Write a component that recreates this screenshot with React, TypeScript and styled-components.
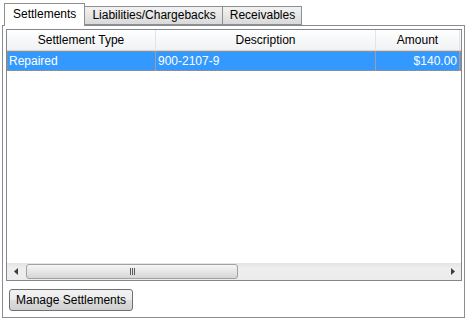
import React from "react";
import styled, { createGlobalStyle } from "styled-components";

const GlobalStyle = createGlobalStyle`
  html, body {
    margin: 0;
    padding: 0;
    background: #ffffff;
  }
  body {
    font-family: "Liberation Sans", Arial, sans-serif;
    font-size: 12px;
    color: #000000;
  }
`;

const COLS = "149px 220px 84px 1fr";

const Window = styled.div`
  width: 468px;
  height: 320px;
  box-sizing: border-box;
  padding: 4px 3px 2px 2px;
  display: flex;
  flex-direction: column;
`;

const TabStrip = styled.div`
  display: flex;
  align-items: flex-end;
  padding-left: 2px;
  height: 22px;
  margin-bottom: -1px;
  position: relative;
  z-index: 1;
`;

const Tab = styled.div<{ $active?: boolean }>`
  box-sizing: border-box;
  height: ${(p) => (p.$active ? "23px" : "19px")};
  margin-bottom: ${(p) => (p.$active ? "0" : "1px")};
  padding: ${(p) => (p.$active ? "3px 8px 0" : "1px 6px 0 7px")};
  margin-left: ${(p) => (p.$active ? "0" : "-1px")};
  border: 1px solid #8e8f8f;
  border-bottom: ${(p) => (p.$active ? "none" : "1px solid #8e8f8f")};
  background: ${(p) =>
    p.$active ? "#ffffff" : "linear-gradient(#f2f2f2, #e6e6e6 50%, #d9d9d9)"};
  font-size: 12px;
  line-height: 15px;
  white-space: nowrap;
`;

const Panel = styled.div`
  flex: 1;
  border: 1px solid #898c95;
  padding: 3px 2px 6px 3px;
  display: flex;
  flex-direction: column;
  background: #ffffff;
`;

const TableBox = styled.div`
  height: 252px;
  box-sizing: border-box;
  border: 1px solid #828790;
  display: flex;
  flex-direction: column;
`;

const HeaderRow = styled.div`
  display: grid;
  grid-template-columns: ${COLS};
  height: 21px;
  box-sizing: border-box;
  background: linear-gradient(#ffffff, #f7f8f9 50%, #f1f2f4);
  border-bottom: 1px solid #d5d5d5;
`;

const HeaderCell = styled.div`
  text-align: center;
  line-height: 20px;
  border-right: 1px solid #e3e4e6;
  white-space: nowrap;
  overflow: hidden;
`;

const Body = styled.div`
  flex: 1;
`;

const DataRow = styled.div<{ $selected?: boolean }>`
  display: grid;
  grid-template-columns: ${COLS};
  height: 20px;
  box-sizing: border-box;
  background: ${(p) => (p.$selected ? "#3399ff" : "transparent")};
  color: ${(p) => (p.$selected ? "#ffffff" : "#000000")};
  outline: ${(p) => (p.$selected ? "1px dotted #c98a4a" : "none")};
  outline-offset: -1px;
`;

const Cell = styled.div<{ $align?: "left" | "right" }>`
  text-align: ${(p) => p.$align || "left"};
  padding: 0 2px;
  line-height: 20px;
  border-right: 1px solid #9a9fa6;
  white-space: nowrap;
  overflow: hidden;
`;

const ScrollBar = styled.div`
  height: 17px;
  box-sizing: border-box;
  background: linear-gradient(#e3e3e3, #eeeeee 30%, #ececec);
  display: flex;
  align-items: center;
`;

const Arrow = styled.div`
  width: 17px;
  height: 17px;
  display: flex;
  align-items: center;
  justify-content: center;
`;

const Thumb = styled.div`
  width: 212px;
  height: 15px;
  box-sizing: border-box;
  margin-left: 2px;
  border: 1px solid #a2a2a2;
  border-radius: 3px;
  background: linear-gradient(#f5f5f5, #e6e6e6 50%, #d6d6d6);
  display: flex;
  align-items: center;
  justify-content: center;
  gap: 1px;
`;

const Grip = styled.span`
  width: 1px;
  height: 7px;
  background: #5a5a5a;
`;

const Track = styled.div`
  flex: 1;
`;

const Footer = styled.div`
  padding: 8px 0 0 3px;
`;

const Button = styled.button`
  height: 22px;
  padding: 0 6px;
  border: 1px solid #707070;
  border-radius: 3px;
  background: linear-gradient(#f2f2f2, #ebebeb 50%, #dddddd 51%, #cfcfcf);
  font-family: "Liberation Sans", Arial, sans-serif;
  font-size: 12px;
  color: #000000;
`;

const rows = [
  { type: "Repaired", description: "900-2107-9", amount: "$140.00" },
];

const Triangle = ({ dir }: { dir: "left" | "right" }) => (
  <svg width="4" height="7" viewBox="0 0 4 7">
    {dir === "left" ? (
      <path d="M4 0 L0 3.5 L4 7 Z" fill="#3c3c3c" />
    ) : (
      <path d="M0 0 L4 3.5 L0 7 Z" fill="#3c3c3c" />
    )}
  </svg>
);

export default function App() {
  return (
    <>
      <GlobalStyle />
      <Window>
        <TabStrip>
          <Tab $active>Settlements</Tab>
          <Tab>Liabilities/Chargebacks</Tab>
          <Tab>Receivables</Tab>
        </TabStrip>
        <Panel>
          <TableBox>
            <HeaderRow>
              <HeaderCell>Settlement Type</HeaderCell>
              <HeaderCell>Description</HeaderCell>
              <HeaderCell>Amount</HeaderCell>
              <div />
            </HeaderRow>
            <Body>
              {rows.map((r, i) => (
                <DataRow key={i} $selected={i === 0}>
                  <Cell>{r.type}</Cell>
                  <Cell>{r.description}</Cell>
                  <Cell $align="right">{r.amount}</Cell>
                  <div />
                </DataRow>
              ))}
            </Body>
            <ScrollBar>
              <Arrow>
                <Triangle dir="left" />
              </Arrow>
              <Thumb>
                <Grip />
                <Grip />
                <Grip />
              </Thumb>
              <Track />
              <Arrow>
                <Triangle dir="right" />
              </Arrow>
            </ScrollBar>
          </TableBox>
          <Footer>
            <Button>Manage Settlements</Button>
          </Footer>
        </Panel>
      </Window>
    </>
  );
}
